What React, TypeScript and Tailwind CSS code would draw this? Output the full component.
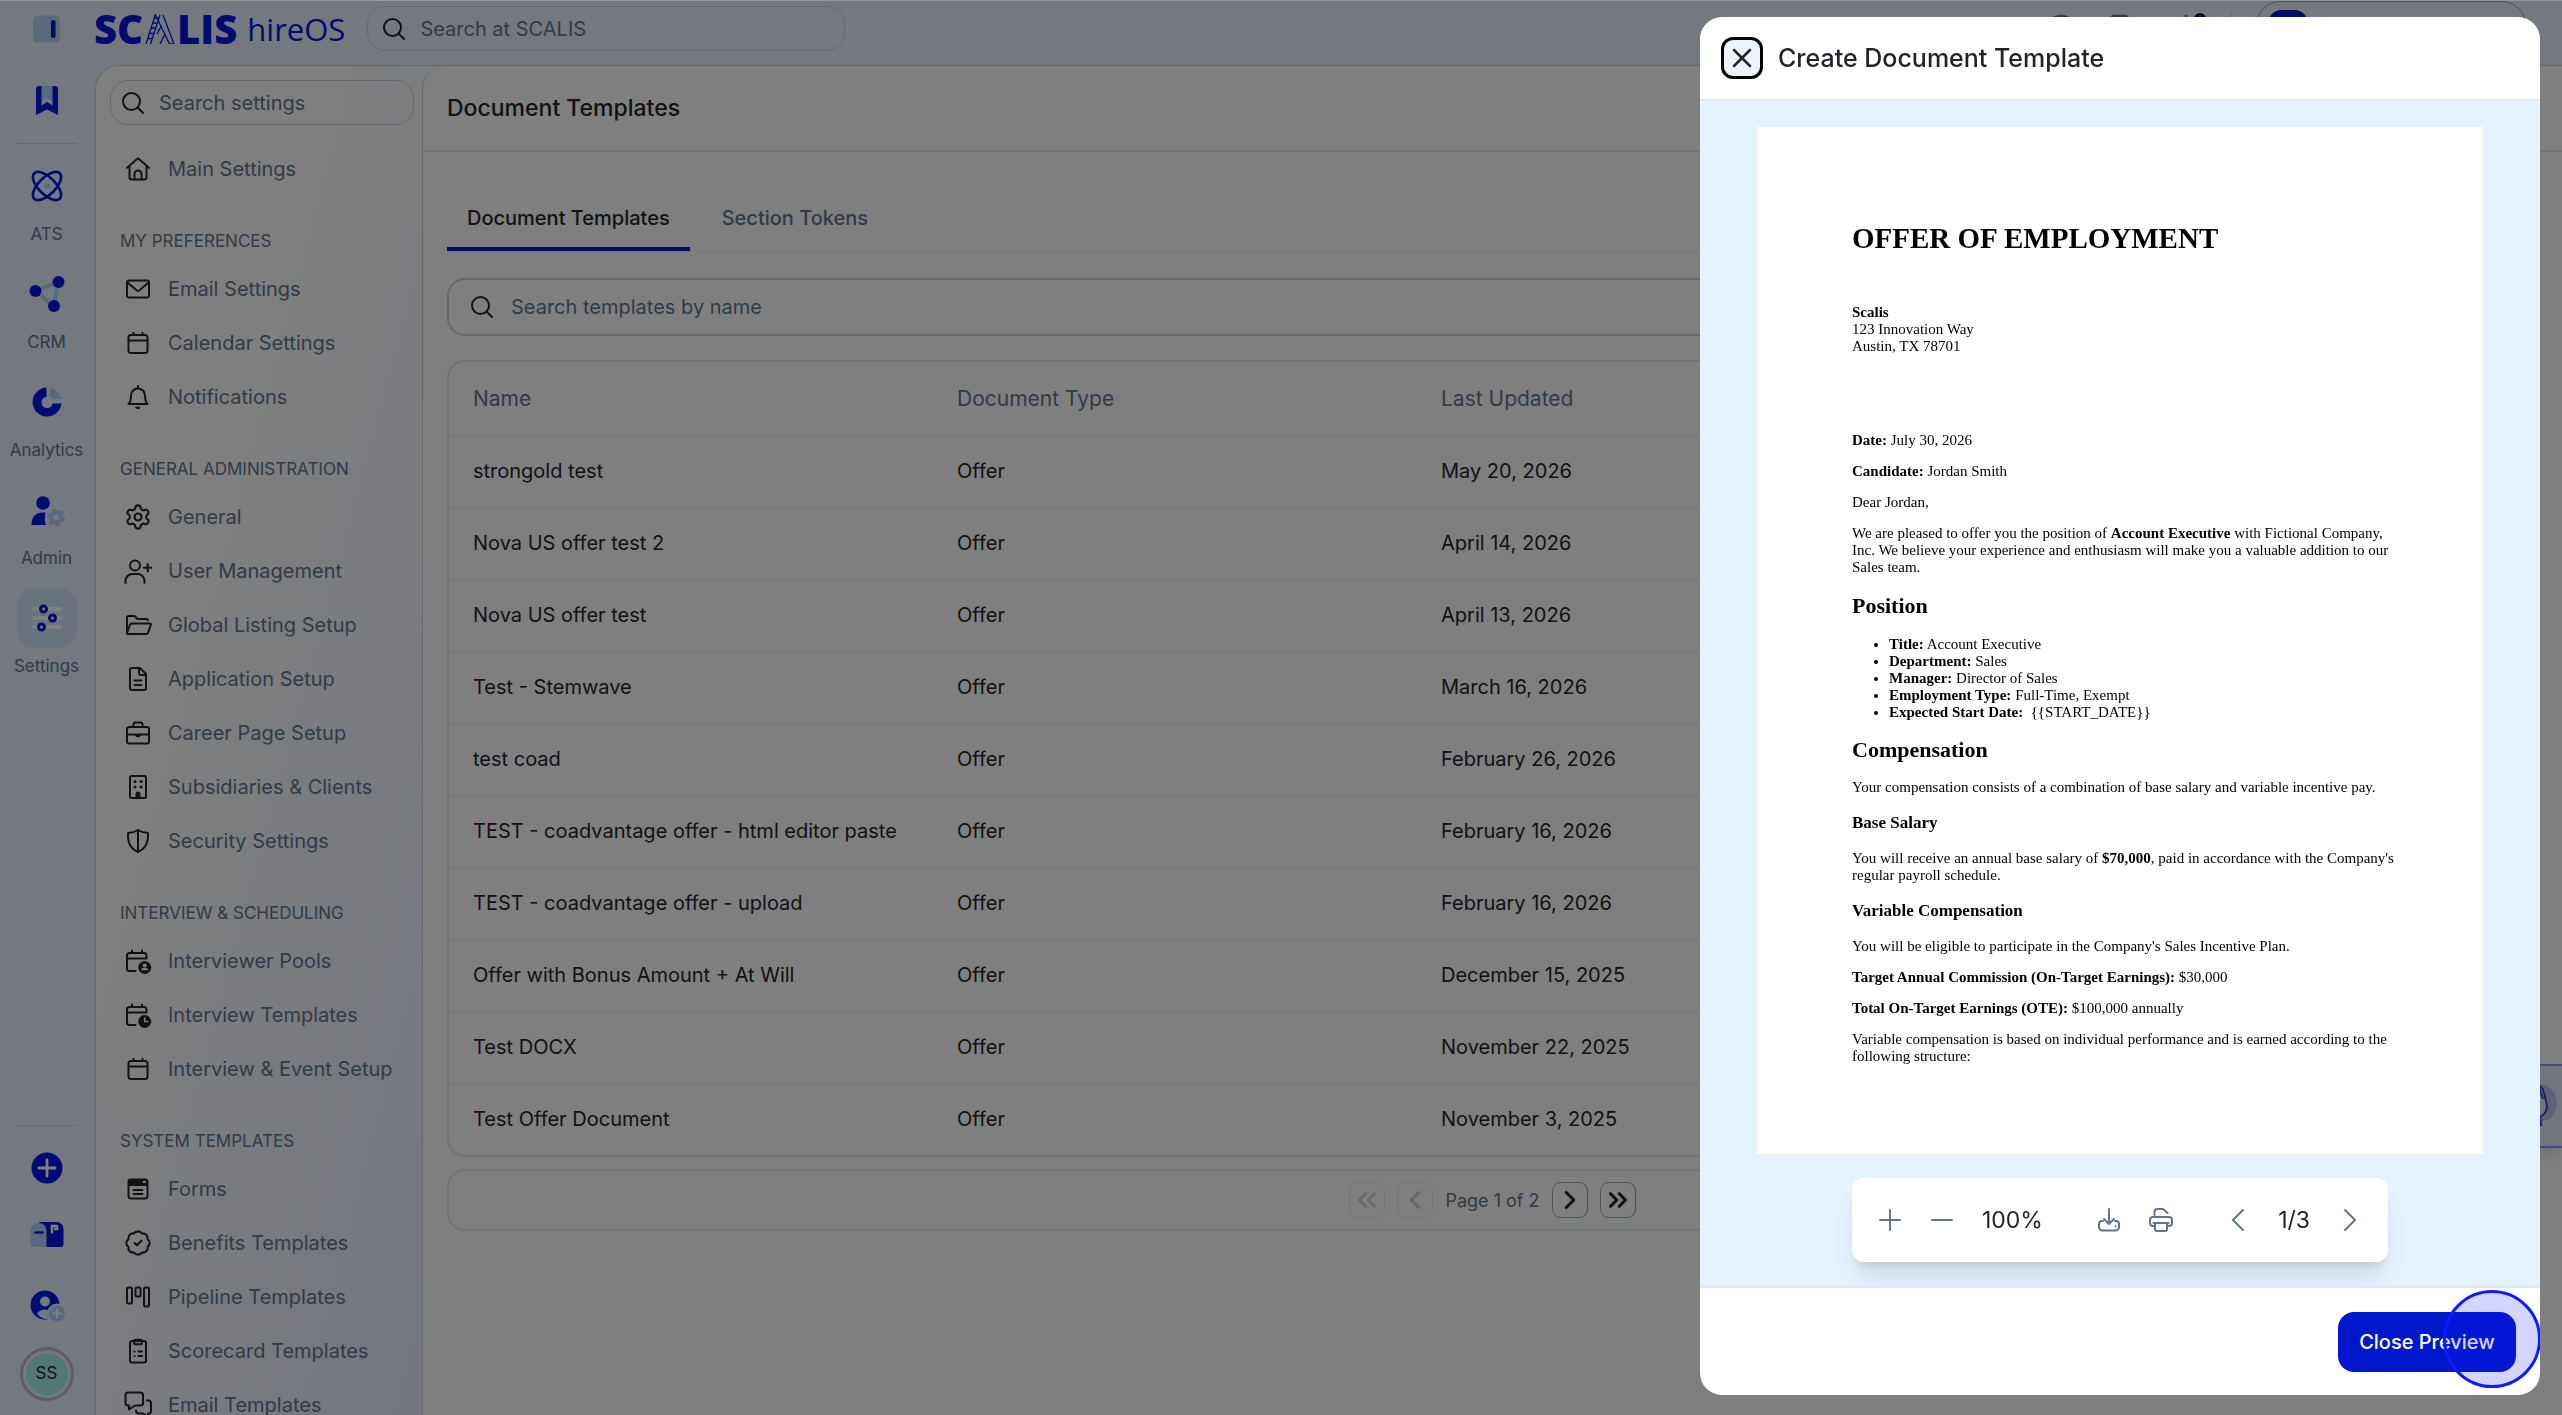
import { BadgeCheck, ChevronLeft, ChevronRight, ChevronsLeft, ChevronsRight, Settings } from 'lucide-react'
import type { ReactNode } from 'react'

interface NavItem {
  label: string
  icon: ReactNode
}

interface NavSection {
  title?: string
  items: NavItem[]
}

function Line({ children }: { children: ReactNode }) {
  return (
    <svg
      viewBox="0 0 28 28"
      className="size-7 shrink-0"
      fill="none"
      stroke="currentColor"
      strokeWidth="2"
      strokeLinecap="round"
      strokeLinejoin="round"
      aria-hidden="true"
    >
      {children}
    </svg>
  )
}

const calendar = (
  <Line>
    <rect x="4.5" y="6" width="19" height="18" rx="2.5" />
    <path d="M4.5 11.5h19M9.5 3.8V6M18.5 3.8V6" />
  </Line>
)

const calendarBadge = (
  <path d="M22.5 11.5V8.5A2.5 2.5 0 0 0 20 6H5.5A2.5 2.5 0 0 0 3 8.5v13A2.5 2.5 0 0 0 5.5 24H11.5M3 11.5h19.5M8 3.5V6M18 3.5V6" />
)

const sections: NavSection[] = [
  {
    items: [
      {
        label: 'Main Settings',
        icon: (
          <Line>
            <path d="M3 12.8 14 3.3l11 9.5M5.5 11v11.5a2 2 0 0 0 2 2h13a2 2 0 0 0 2-2V11" />
            <path d="M10.5 24.5v-5.5a3.5 3.5 0 0 1 7 0v5.5" />
          </Line>
        ),
      },
    ],
  },
  {
    title: 'MY PREFERENCES',
    items: [
      {
        label: 'Email Settings',
        icon: (
          <Line>
            <rect x="3" y="5.5" width="22" height="17" rx="2" />
            <path d="m4 8 8.8 7.5a2 2 0 0 0 2.4 0L24 8" />
          </Line>
        ),
      },
      { label: 'Calendar Settings', icon: calendar },
      {
        label: 'Notifications',
        icon: (
          <Line>
            <path d="M4.5 21c1.800-2 2.500-4.500 2.500-8.500a7 7 0 0 1 14 0c0 4 .7 6.500 2.500 8.500zM14 3v2" />
            <path d="M12 24.200h4a2 1.500 0 0 1-4 0z" fill="currentColor" strokeWidth="1" />
          </Line>
        ),
      },
    ],
  },
  {
    title: 'GENERAL ADMINISTRATION',
    items: [
      { label: 'General', icon: <Settings className="size-7 shrink-0" strokeWidth={1.8} /> },
      {
        label: 'User Management',
        icon: (
          <Line>
            <circle cx="11" cy="8.5" r="5" />
            <path d="M1.5 26v-2a7 7 0 0 1 7-7h5a7 7 0 0 1 7 7v2M23.7 7v7.5M20 10.7h7.5" />
          </Line>
        ),
      },
      {
        label: 'Global Listing Setup',
        icon: (
          <Line>
            <path d="M3 22V6.5A1.5 1.5 0 0 1 4.5 5h6l3 3h9A1.5 1.5 0 0 1 24 9.3" />
            <path d="m3 22 3-8.2a2 2 0 0 1 1.9-1.3H26c.7 0 1.100.6.9 1.200l-3 8.400a1.500 1.500 0 0 1-1.400 1H4a1 1 0 0 1-1-1.100z" />
          </Line>
        ),
      },
      {
        label: 'Application Setup',
        icon: (
          <Line>
            <path d="M8 3h8l6 6v14a2 2 0 0 1-2 2H8a2 2 0 0 1-2-2V5a2 2 0 0 1 2-2z" />
            <path d="M15 3v5a2 2 0 0 0 2 2h5M10.5 15.5h7M10.5 20h7" />
          </Line>
        ),
      },
      {
        label: 'Career Page Setup',
        icon: (
          <Line>
            <rect x="3" y="8" width="22" height="16.5" rx="2" />
            <path d="M9.5 8V5.5a2 2 0 0 1 2-2h5a2 2 0 0 1 2 2V8M3 15.5h22" />
            <path d="M11.5 16h5a2.5 2 0 0 1-5 0z" fill="currentColor" strokeWidth="1" />
          </Line>
        ),
      },
      {
        label: 'Subsidiaries & Clients',
        icon: (
          <Line>
            <rect x="6" y="3" width="16" height="22" rx="1.5" />
            <path d="M11 8.5h.1M17 8.5h.1M11 14h.1M17 14h.1" strokeWidth="3" />
            <path d="M12.5 25v-4a1.5 1.5 0 0 1 3 0v4z" fill="currentColor" />
          </Line>
        ),
      },
      {
        label: 'Security Settings',
        icon: (
          <Line>
            <path d="M14 3c3 2 6 2.700 10 3 .3 9-1.500 15-10 19C5.500 21 3.700 15 4 6c4-.3 7-1 10-3zM14 3v22" />
          </Line>
        ),
      },
    ],
  },
  {
    title: 'INTERVIEW & SCHEDULING',
    items: [
      {
        label: 'Interviewer Pools',
        icon: (
          <Line>
            {calendarBadge}
            <circle cx="20.7" cy="20.5" r="6.5" fill="currentColor" stroke="none" />
            <g fill="#fff" stroke="none">
              <circle cx="20.7" cy="18.5" r="2" />
              <path d="M17 23.2a3.7 2.5 0 0 1 7.4 0z" />
            </g>
          </Line>
        ),
      },
      {
        label: 'Interview Templates',
        icon: (
          <Line>
            {calendarBadge}
            <circle cx="20.7" cy="20.5" r="6.5" fill="currentColor" stroke="none" />
            <path d="M20.7 17v3.5h3" stroke="#fff" strokeWidth="1.5" />
          </Line>
        ),
      },
      { label: 'Interview & Event Setup', icon: calendar },
    ],
  },
  {
    title: 'SYSTEM TEMPLATES',
    items: [
      {
        label: 'Forms',
        icon: (
          <Line>
            <rect x="4.5" y="4.5" width="19" height="19" rx="2.5" />
            <path d="M5 5h18v5H5z" fill="currentColor" />
            <path d="M19.5 7h1.5" stroke="#fff" />
            <path d="M9.5 15h9M9.5 19h9" />
          </Line>
        ),
      },
      { label: 'Benefits Templates', icon: <BadgeCheck className="size-7 shrink-0" strokeWidth={1.8} /> },
      {
        label: 'Pipeline Templates',
        icon: (
          <Line>
            <rect x="3" y="4.5" width="5" height="16" rx="1.5" />
            <rect x="11.5" y="4.5" width="5" height="9" rx="1.5" />
            <rect x="20" y="4.5" width="5" height="19" rx="1.5" />
          </Line>
        ),
      },
      {
        label: 'Scorecard Templates',
        icon: (
          <Line>
            <rect x="6" y="4" width="16" height="21.5" rx="2" />
            <rect x="10" y="2.8" width="8" height="4.5" rx="1.5" />
            <path d="M10.5 14.5h.1M10.5 19h.1M14.5 14.5h3.5M14.5 19h3.5" />
          </Line>
        ),
      },
      {
        label: 'Email Templates',
        icon: (
          <Line>
            <path d="M4 1.5h12.5a2.5 2.5 0 0 1 2.5 2.5v8a2.5 2.5 0 0 1-2.5 2.5H11L5 18.5v-4H4A2.5 2.5 0 0 1 1.5 12V4A2.5 2.5 0 0 1 4 1.5z" />
            <path d="M23 9.5h1.5A2.5 2.5 0 0 1 27 12v8.5a2 2 0 0 1-2 2h-1v4l-5-4h-4a3 3 0 0 1-3-3" />
          </Line>
        ),
      },
    ],
  },
]

const templates = [
  { name: 'strongold test', type: 'Offer', updated: 'May 20, 2026' },
  { name: 'Nova US offer test 2', type: 'Offer', updated: 'April 14, 2026' },
  { name: 'Nova US offer test', type: 'Offer', updated: 'April 13, 2026' },
  { name: 'Test - Stemwave', type: 'Offer', updated: 'March 16, 2026' },
  { name: 'test coad', type: 'Offer', updated: 'February 26, 2026' },
  { name: 'TEST - coadvantage offer - html editor paste', type: 'Offer', updated: 'February 16, 2026' },
  { name: 'TEST - coadvantage offer - upload', type: 'Offer', updated: 'February 16, 2026' },
  { name: 'Offer with Bonus Amount + At Will', type: 'Offer', updated: 'December 15, 2025' },
  { name: 'Test DOCX', type: 'Offer', updated: 'November 22, 2025' },
  { name: 'Test Offer Document', type: 'Offer', updated: 'November 3, 2025' },
]

const railItems: NavItem[] = [
  {
    label: 'ATS',
    icon: (
      <svg viewBox="0 0 32 32" className="size-8" fill="none" stroke="#0017e8" strokeWidth="2.6">
        <ellipse cx="16" cy="16" rx="18" ry="8.5" transform="rotate(45 16 16)" />
        <ellipse cx="16" cy="16" rx="18" ry="8.5" transform="rotate(-45 16 16)" />
        <circle cx="16" cy="16" r="3" fill="#aed2f5" stroke="none" />
      </svg>
    ),
  },
  {
    label: 'CRM',
    icon: (
      <svg viewBox="0 0 36 36" className="size-9">
        <path d="M7 15 29 6 25 31z" fill="none" stroke="#aed2f5" strokeWidth="4" />
        <g fill="#0017e8">
          <circle cx="6.5" cy="15" r="6" />
          <circle cx="29.5" cy="6" r="6" />
          <circle cx="25" cy="30" r="6" />
        </g>
      </svg>
    ),
  },
  {
    label: 'Analytics',
    icon: (
      <svg viewBox="0 0 32 32" className="size-8">
        <path d="M15.5 1.5A14.5 14.5 0 1 0 30.5 17.5h-9a5.5 5.5 0 1 1-6-6.5z" fill="#0017e8" />
        <path d="M19 1.5A14.5 14.5 0 0 1 30.5 13h-8.5l-3-3z" fill="#aed2f5" />
      </svg>
    ),
  },
  {
    label: 'Admin',
    icon: (
      <svg viewBox="0 0 36 36" className="size-9">
        <circle cx="14" cy="11" r="6.8" fill="#0017e8" />
        <path d="M2.5 33c0-8 4-12.5 11.5-12.5h2.5c-1 4-1 9 .5 12.5z" fill="#0017e8" />
        <circle cx="27" cy="25.5" r="5" fill="none" stroke="#aed2f5" strokeWidth="4.5" />
        <circle cx="27" cy="25.5" r="7.8" fill="none" stroke="#aed2f5" strokeWidth="2.5" strokeDasharray="4.084 4.084" />
      </svg>
    ),
  },
  {
    label: 'Settings',
    icon: (
      <svg viewBox="0 0 32 32" className="size-8">
        <path d="M3 7h26M3 16h26M3 25h26" stroke="#fff" strokeWidth="4" strokeLinecap="round" />
        <g fill="#fff" stroke="#0017e8" strokeWidth="3">
          <circle cx="12.5" cy="7" r="3" />
          <circle cx="21.5" cy="16" r="3" />
          <circle cx="10.5" cy="25" r="3" />
        </g>
      </svg>
    ),
  },
]

export default function App() {
  return (
    <div className="flex h-screen flex-col overflow-hidden border-t border-[#929a98] bg-[#e6f2ff] font-['Inter',sans-serif] text-[20px] text-[#212529]">
      <TopBar />
      <div className="flex min-h-0 flex-1">
        <Rail />
        <div className="flex min-w-0 flex-1 overflow-hidden rounded-tl-3xl border-t border-l border-slate-300 bg-[linear-gradient(105deg,#ffffff_8%,#e6edff_24%)]">
          <SettingsNav />
          <TemplatesPage />
        </div>
      </div>
      <HelpTab />
      <div className="fixed inset-x-0 top-px bottom-0 bg-black/50" />
      <PreviewDrawer />
    </div>
  )
}

function SearchIcon() {
  return (
    <svg viewBox="0 0 24 24" className="size-6 shrink-0" fill="none" stroke="currentColor" strokeWidth="2" strokeLinecap="round" aria-hidden="true">
      <circle cx="10.5" cy="10.5" r="8.5" />
      <path d="m16.8 16.8 5.2 5.2" />
    </svg>
  )
}

function TopBar() {
  return (
    <header className="flex h-16 shrink-0 items-start pl-8">
      <button type="button" aria-label="Toggle sidebar" className="mt-3.5">
        <svg viewBox="0 0 28 28" className="size-7">
          <rect x="1" y="0.5" width="27" height="27" rx="4.5" fill="#b4d5f8" />
          <rect x="19" y="5" width="4.5" height="18" rx="2" fill="#0017c8" />
        </svg>
      </button>
      <a href="#home" aria-label="SCALIS hireOS" className="ml-[34px] flex h-14 items-center font-['Open_Sans',sans-serif] text-[#0014e0]">
        <span className="text-[40px] leading-none font-extrabold">SC</span>
        <svg viewBox="0 0 30 30" className="mx-0.5 size-[30px]" fill="none" stroke="currentColor" strokeWidth="1.3">
          <path d="M1 30 10.5 0M5.5 30 15 1M10 0 24.5 30M18 1 29 30h-4.5M3 24.5h4.5M4.5 19.5h4.5M6.5 14h4.5M8 9h4.5M9.5 4h4.5M12 20l4.5-8.5M15 30l5-10" />
        </svg>
        <span className="text-[40px] leading-none font-extrabold">LIS</span>
        <span className="ml-2.5 text-[31px] leading-none">hireOS</span>
      </a>
      <label className="mt-[5px] ml-[22px] flex h-[45px] w-[478px] items-center gap-3.5 rounded-[18px] border border-slate-300 px-3.5">
        <SearchIcon />
        <input
          type="search"
          aria-label="Search at SCALIS"
          placeholder="Search at SCALIS"
          className="w-full bg-transparent outline-none placeholder:text-slate-500"
        />
      </label>
      <div className="mr-9 ml-auto flex h-14 items-center text-slate-500">
        <svg viewBox="0 0 180 32" className="h-8 w-[180px]" fill="none" stroke="currentColor" strokeWidth="2.5" aria-hidden="true">
          <circle cx="10" cy="16" r="13" />
          <rect x="60" y="3" width="17" height="26" rx="3" />
          <path d="M125 24c3-3 3-6 3-11a7 7 0 0 1 14 0c0 5 0 8 3 11zM135 2v4" />
          <circle cx="149" cy="6" r="5" fill="#0017ff" stroke="#000" strokeWidth="2" />
        </svg>
        <div className="mr-6 h-8 w-px bg-slate-300" />
        <button type="button" aria-label="Account" className="flex h-14 w-[270px] items-center rounded-3xl border border-slate-400 pl-3">
          <span className="size-[38px] rounded-xl bg-[#0017cc]" />
        </button>
      </div>
    </header>
  )
}

function Rail() {
  return (
    <nav aria-label="Products" className="flex w-[95px] shrink-0 flex-col items-center pr-0.5 text-[17px] text-slate-500">
      <a href="#bookmarks" aria-label="Bookmarks" className="mt-5 mb-7">
        <svg viewBox="0 0 24 30" className="h-[30px] w-6">
          <path d="M5 1h14v16l-7-4-7 4z" fill="#aed2f5" />
          <path d="M1 4a3 3 0 0 1 3-3h2.5v19.5L12 17l5.5 3.5V1H20a3 3 0 0 1 3 3v26l-11-5.5L1 30z" fill="#0017e8" />
        </svg>
      </a>
      <div className="h-px w-15 bg-slate-300" />
      <ul className="mt-3 flex flex-col gap-[18px]">
        {railItems.map(({ label, icon }) => (
          <li key={label}>
            <a href={`#${label}`} className="flex flex-col items-center gap-1.5">
              <span className={label === 'Settings' ? 'grid size-15 place-items-center rounded-[18px] bg-[#d2e7fa]' : 'grid size-15 place-items-center'}>
                {icon}
              </span>
              <span className="leading-6">{label}</span>
            </a>
          </li>
        ))}
      </ul>
      <div className="mt-auto mb-[14px] flex flex-col items-center">
        <div className="mb-[26px] h-px w-15 bg-slate-300" />
        <button type="button" aria-label="Create">
          <svg viewBox="0 0 32 32" className="size-8">
            <circle cx="16" cy="16" r="15.5" fill="#0017e8" />
            <path d="M16 8v16M8 16h16" stroke="#fff" strokeWidth="2.8" strokeLinecap="round" />
          </svg>
        </button>
        <button type="button" aria-label="Inbox" className="mt-[34px]">
          <svg viewBox="0 0 34 34" className="size-[34px]">
            <path d="M9 4h17a7 7 0 0 1 7.5 7.5V26a3 3 0 0 1-3 3H14z" fill="#0017e8" />
            <path d="M.5 13a8 8 0 0 1 16 0v16H3.5a3 3 0 0 1-3-3z" fill="#aed2f5" />
            <path d="M5.5 14.5h7" stroke="#0017e8" strokeWidth="2.6" strokeLinecap="round" />
            <path d="M22 15.5V8h5v3h-3" stroke="#fff" strokeWidth="2.4" fill="none" />
          </svg>
        </button>
        <button type="button" aria-label="Add contact" className="mt-[37px]">
          <svg viewBox="0 0 36 36" className="size-9">
            <circle cx="16" cy="16" r="14.5" fill="#0017e8" />
            <circle cx="16" cy="12.5" r="5" fill="#e6f2ff" />
            <path d="M8 24.5c4-5.5 12-5.5 15 0l-3 5.5c-5 .5-9-1-12-5.5z" fill="#e6f2ff" />
            <circle cx="28" cy="24.5" r="9" fill="#aed2f5" stroke="#e6f2ff" strokeWidth="2" />
            <path d="M28 20.5v8M24 24.5h8" stroke="#fff" strokeWidth="2" strokeLinecap="round" />
          </svg>
        </button>
        <button
          type="button"
          aria-label="Profile"
          className="mt-[22px] grid size-[54px] place-items-center rounded-full border-[3px] border-[#b9bccb] text-[#212529]"
        >
          <span className="grid size-[42px] place-items-center rounded-full bg-[#a8f0ea]">SS</span>
        </button>
      </div>
    </nav>
  )
}

function SettingsNav() {
  return (
    <nav aria-label="Settings" className="w-[326px] shrink-0 overflow-hidden pt-3.5 text-slate-500">
      <label className="mr-2 mb-[17px] ml-3.5 flex h-[45px] items-center gap-3.5 rounded-[18px] border border-slate-300 px-2.5 text-[#212529]">
        <SearchIcon />
        <input
          type="search"
          aria-label="Search settings"
          placeholder="Search settings"
          className="w-full bg-transparent outline-none placeholder:text-slate-500"
        />
      </label>
      {sections.map(({ title, items }, i) => (
        <section key={i} className="mb-[33px]">
          {title && <h2 className="mb-[9px] pl-6 text-[17px] leading-6">{title}</h2>}
          <ul>
            {items.map(({ label, icon }) => (
              <li key={label}>
                <a href="#settings" className="flex h-[54px] items-center gap-4 pl-7 whitespace-nowrap">
                  <span className="text-[#212529]">{icon}</span>
                  {label}
                </a>
              </li>
            ))}
          </ul>
        </section>
      ))}
    </nav>
  )
}

function TemplatesPage() {
  return (
    <main className="min-w-0 flex-1 overflow-hidden rounded-tl-3xl border-l border-slate-300 bg-white">
      <div className="flex h-[86px] items-center border-b-2 border-slate-200 px-6">
        <h1 className="text-[23px] font-medium">Document Templates</h1>
      </div>
      <div className="px-6 pt-8">
        <div role="tablist" className="flex h-[68px] gap-3 border-b border-slate-200 font-medium">
          <button type="button" role="tab" aria-selected="true" className="border-b-4 border-[#0017cc] px-5 pt-1">
            Document Templates
          </button>
          <button type="button" role="tab" aria-selected="false" className="border-b-4 border-transparent px-5 pt-1 text-slate-500">
            Section Tokens
          </button>
        </div>

        <label className="mt-[26px] flex h-[58px] items-center gap-[17px] rounded-[18px] border-2 border-slate-300 px-[21px]">
          <SearchIcon />
          <input
            type="search"
            aria-label="Search templates by name"
            placeholder="Search templates by name"
            className="w-full bg-transparent outline-none placeholder:text-slate-500"
          />
        </label>

        <div className="mt-6 overflow-hidden rounded-[18px] border-2 border-slate-200">
          <table className="w-full table-fixed text-left">
            <thead>
              <tr className="h-[73px] text-[21px] text-slate-500">
                <th className="w-[484px] px-6 font-normal">Name</th>
                <th className="w-[484px] px-6 font-normal">Document Type</th>
                <th className="px-6 font-normal">Last Updated</th>
              </tr>
            </thead>
            <tbody>
              {templates.map(({ name, type, updated }) => (
                <tr key={name} className="h-[72px] border-t border-slate-200">
                  <td className="px-6">{name}</td>
                  <td className="px-6">{type}</td>
                  <td className="px-6">{updated}</td>
                </tr>
              ))}
            </tbody>
          </table>
        </div>

        <div className="mt-3 flex h-[62px] items-center justify-center gap-3 rounded-[18px] border-2 border-slate-200">
          <PageButton label="First page" disabled>
            <ChevronsLeft />
          </PageButton>
          <PageButton label="Previous page" disabled>
            <ChevronLeft />
          </PageButton>
          <span className="text-[18px] text-slate-500">Page 1 of 2</span>
          <PageButton label="Next page">
            <ChevronRight />
          </PageButton>
          <PageButton label="Last page">
            <ChevronsRight />
          </PageButton>
        </div>
      </div>
    </main>
  )
}

function PageButton({ label, disabled, children }: { label: string; disabled?: boolean; children: ReactNode }) {
  return (
    <button
      type="button"
      aria-label={label}
      disabled={disabled}
      className="grid size-9 place-items-center rounded-[9px] border border-slate-400 disabled:opacity-20 [&_svg]:size-[30px] [&_svg]:stroke-[2.5]"
    >
      {children}
    </button>
  )
}

// Assistant tab docked to the right edge of the window
function HelpTab() {
  return (
    <div className="fixed top-[1064px] right-0 flex h-[84px] w-12 items-center rounded-l-xl border-y-2 border-l-2 border-[#8a90f0] bg-[#e4ebfb] shadow-lg">
      <svg viewBox="0 0 46 46" className="size-[46px]" aria-hidden="true">
        <circle cx="22" cy="20" r="19" fill="#c3bdf0" />
        <g fill="#e4ebfb" stroke="#3a3fd0" strokeWidth="2">
          <path d="M14 12c2-12 12-12 14-2l2 8c3 10-2 14-6 16l1 8-12-4z" />
          <path d="m23 4 4 12M19 6l6 4" />
        </g>
      </svg>
    </div>
  )
}

function PreviewDrawer() {
  return (
    <div
      role="dialog"
      aria-label="Create Document Template"
      className="fixed top-[17px] right-[22px] bottom-5 flex w-[840px] flex-col overflow-hidden rounded-[22px] bg-white"
    >
      <div className="flex h-[84px] shrink-0 items-center gap-[15px] border-b-2 border-slate-200 px-[21px]">
        <button
          type="button"
          aria-label="Close"
          className="grid size-[42px] place-items-center rounded-xl border-[3px] border-black bg-[#eef3fb]"
        >
          <svg viewBox="0 0 20 20" className="size-5" stroke="currentColor" strokeWidth="2.5" strokeLinecap="round">
            <path d="m2 2 16 16M18 2 2 18" />
          </svg>
        </button>
        <h2 className="text-[25px] leading-9 font-medium">Create Document Template</h2>
      </div>

      <div className="flex min-h-0 flex-1 flex-col items-center gap-6 bg-[#e6f2ff] pt-[26px]">
        <OfferLetter />
        <div className="flex h-[84px] w-[536px] shrink-0 items-center justify-between rounded-xl bg-white px-[26px] text-[23px] shadow-xl">
          <div className="flex items-center gap-7">
            <ToolButton label="Zoom in" path="M12 2v20M2 12h20" />
            <ToolButton label="Zoom out" path="M2 12h20" />
            <span>100%</span>
          </div>
          <div className="flex items-center gap-7">
            <ToolButton label="Download" path="M12 1v14M7 11l5 5 5-5M6 13H5a3 3 0 0 0-3 3v3a3.5 3.5 0 0 0 3.5 3.5h13A3.5 3.5 0 0 0 22 19v-3a3 3 0 0 0-3-3h-1M18.5 18.5h.1" />
            <ToolButton label="Print" path="M5.5 7V4a3 3 0 0 1 3-3h5.5l4.5 4M6 18H4a3 3 0 0 1-3-3v-3a3 3 0 0 1 3-3h16a3 3 0 0 1 3 3v3a3 3 0 0 1-3 3h-2M4.5 15h15M6 15v6a2 2 0 0 0 2 2h8a2 2 0 0 0 2-2v-6" />
          </div>
          <div className="flex items-center gap-7">
            <ToolButton label="Previous page" path="m17 2-10 10 10 10" />
            <span>1/3</span>
            <ToolButton label="Next page" path="m7 2 10 10-10 10" />
          </div>
        </div>
      </div>

      <div className="flex h-[109px] shrink-0 items-center justify-end border-t-2 border-slate-200 px-6">
        <button type="button" className="relative h-15 w-[178px] rounded-2xl bg-[#0017cc] font-medium text-white">
          Close Preview
          {/* Click ripple */}
          <span className="absolute -top-[22px] -right-[25px] size-[98px] rounded-full border-[3px] border-[#0f1bff] bg-[#0f1bff]/18" />
        </button>
      </div>
    </div>
  )
}

function ToolButton({ label, path }: { label: string; path: string }) {
  return (
    <button type="button" aria-label={label} className="text-slate-500">
      <svg viewBox="0 0 24 24" className="size-6" fill="none" stroke="currentColor" strokeWidth="2" strokeLinecap="round" strokeLinejoin="round">
        <path d={path} />
      </svg>
    </button>
  )
}

function OfferLetter() {
  return (
    <article className="aspect-[210/297] w-[726px] shrink-0 bg-white pt-[93px] pr-20 pl-[95px] font-['Liberation_Serif',serif] text-[15px] leading-[17px] text-black">
      <h1 className="text-[29px] leading-9 font-bold">OFFER OF EMPLOYMENT</h1>
      <address className="mt-12 not-italic">
        <strong>Scalis</strong>
        <br />
        123 Innovation Way
        <br />
        Austin, TX 78701
      </address>
      <div className="mt-[77px] space-y-3.5">
        <p>
          <strong>Date:</strong> July 30, 2026
        </p>
        <p>
          <strong>Candidate:</strong> Jordan Smith
        </p>
        <p>Dear Jordan,</p>
        <p>
          We are pleased to offer you the position of <strong>Account Executive</strong> with Fictional Company, Inc.
          We believe your experience and enthusiasm will make you a valuable addition to our Sales team.
        </p>
      </div>
      <h2 className="my-[18px] text-[22px] leading-6 font-bold">Position</h2>
      <ul className="list-disc pl-[37px]">
        <li>
          <strong>Title:</strong> Account Executive
        </li>
        <li>
          <strong>Department:</strong> Sales
        </li>
        <li>
          <strong>Manager:</strong> Director of Sales
        </li>
        <li>
          <strong>Employment Type:</strong> Full-Time, Exempt
        </li>
        <li>
          <strong>Expected Start Date:</strong> &nbsp;{'{{START_DATE}}'}
        </li>
      </ul>
      <h2 className="my-[17px] text-[22px] leading-6 font-bold">Compensation</h2>
      <p>Your compensation consists of a combination of base salary and variable incentive pay.</p>
      <h3 className="my-[17px] text-[17px] leading-5 font-bold">Base Salary</h3>
      <p>
        You will receive an annual base salary of <strong>$70,000</strong>, paid in accordance with the Company's
        regular payroll schedule.
      </p>
      <h3 className="my-[17px] text-[17px] leading-5 font-bold">Variable Compensation</h3>
      <div className="space-y-3.5">
        <p>You will be eligible to participate in the Company's Sales Incentive Plan.</p>
        <p>
          <strong>Target Annual Commission (On-Target Earnings):</strong> $30,000
        </p>
        <p>
          <strong>Total On-Target Earnings (OTE):</strong> $100,000 annually
        </p>
        <p>Variable compensation is based on individual performance and is earned according to the following structure:</p>
      </div>
    </article>
  )
}
